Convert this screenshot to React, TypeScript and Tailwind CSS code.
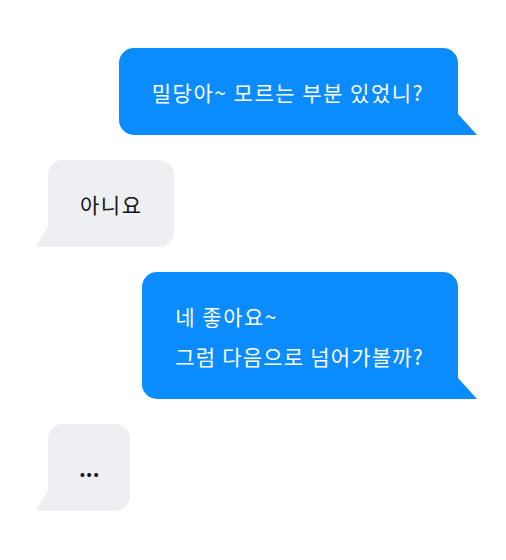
import { ReactNode } from "react";

type Side = "me" | "other";

function Bubble({ side, children }: { side: Side; children: ReactNode }) {
  const mine = side === "me";
  return (
    <div className={mine ? "relative self-end" : "relative self-start"}>
      <div
        className={
          mine
            ? "rounded-[15px] rounded-br-none bg-[#0a8cff] pl-[33px] pr-[34px] py-[23.5px] text-white"
            : "rounded-[15px] rounded-bl-none bg-[#eeeff2] pl-[32px] pr-[32px] py-[23.5px] text-[#151515]"
        }
      >
        {children}
      </div>
      {mine ? (
        <svg
          className="absolute bottom-0 right-[-19px]"
          width="19"
          height="21"
          viewBox="0 0 19 21"
        >
          <polygon points="0,0 19,21 0,21" fill="#0a8cff" />
        </svg>
      ) : (
        <svg
          className="absolute bottom-0 left-[-13px]"
          width="13"
          height="20"
          viewBox="0 0 13 20"
        >
          <polygon points="13,0 13,20 0,20" fill="#eeeff2" />
        </svg>
      )}
    </div>
  );
}

export default function App() {
  return (
    <div className="min-h-[560px] w-full bg-white font-['Noto_Sans_CJK_KR','Noto_Sans',sans-serif] text-[21px] leading-[40px] tracking-[1.5px]">
      <div className="flex flex-col gap-[25px] px-12 pt-12">
        <Bubble side="me">밀당아~ 모르는 부분 있었니?</Bubble>
        <Bubble side="other">아니요</Bubble>
        <Bubble side="me">
          <p>네 좋아요~</p>
          <p className="tracking-[1.2px]">그럼 다음으로 넘어가볼까?</p>
        </Bubble>
        <Bubble side="other">
          <span className="block -mx-[1px] font-bold tracking-[0px]">...</span>
        </Bubble>
      </div>
    </div>
  );
}
